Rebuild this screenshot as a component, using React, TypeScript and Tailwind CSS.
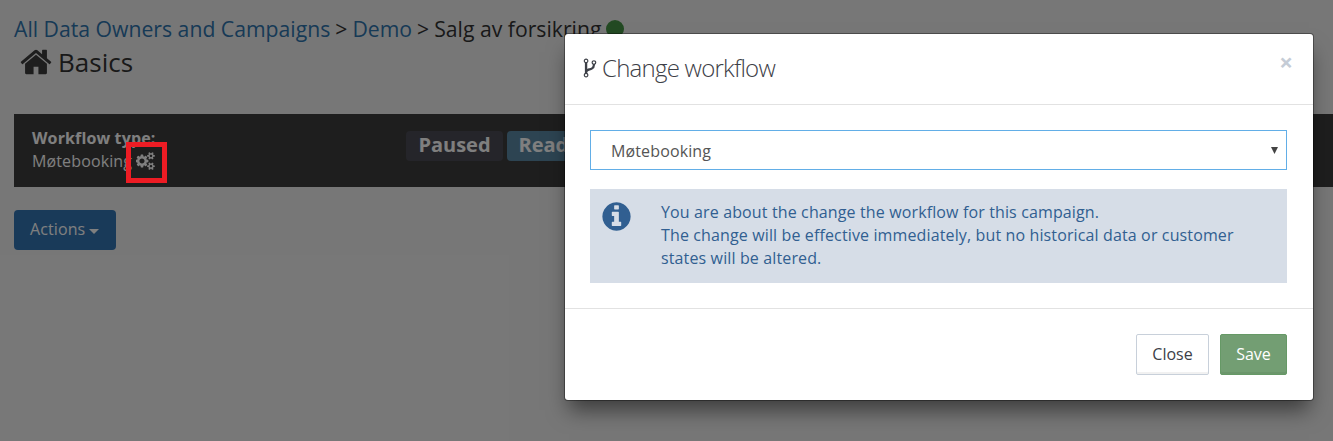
import type { ReactNode } from "react";

const ICONS = {
  home: "M1472 992v480q0 26-19 45t-45 19h-384v-384h-256v384h-384q-26 0-45-19t-19-45v-480q0-1 .5-3t.5-3l575-474 575 474q1 2 1 6zm223-69l-62 74q-8 9-21 11h-3q-13 0-21-7l-692-577-692 577q-12 8-24 7-13-2-21-11l-62-74q-8-10-7-23.5t11-21.5l719-599q32-26 76-26t76 26l244 204v-195q0-14 9-23t23-9h192q14 0 23 9t9 23v408l219 182q10 8 11 21.5t-7 23.5z",
  cogs: "M832 896q0-106-75-181t-181-75-181 75-75 181 75 181 181 75 181-75 75-181zm768 512q0-52-38-90t-90-38-90 38-38 90q0 53 37.5 90.5t90.5 37.5 90.5-37.5 37.5-90.5zm0-1024q0-52-38-90t-90-38-90 38-38 90q0 53 37.5 90.5t90.5 37.5 90.5-37.5 37.5-90.5zm-384 421v185q0 10-7 19.5t-16 10.5l-155 24q-11 35-32 76 34 48 90 115 7 11 7 20 0 12-7 19-23 30-82.5 89.5t-78.5 59.5q-11 0-21-7l-115-90q-37 19-77 31-11 108-23 155-7 24-30 24h-186q-11 0-20-7.5t-10-17.5l-23-153q-34-10-75-31l-118 89q-7 7-20 7-11 0-21-8-144-133-144-160 0-9 7-19 10-14 41-53t47-61q-23-44-35-82l-152-24q-10-1-17-9.5t-7-19.5v-185q0-10 7-19.5t16-10.5l155-24q11-35 32-76-34-48-90-115-7-11-7-20 0-12 7-20 22-30 82-89t79-59q11 0 21 7l115 90q34-18 77-32 11-108 23-154 7-24 30-24h186q11 0 20 7.5t10 17.5l23 153q34 10 75 31l118-89q8-7 20-7 11 0 21 8 144 133 144 160 0 8-7 19-12 16-42 54t-45 60q23 48 34 82l152 23q10 2 17 10.5t7 19.5zm640 533v140q0 16-149 31-12 27-30 52 51 113 51 138 0 4-4 7-122 71-124 71-8 0-46-47t-52-68q-20 2-30 2t-30-2q-14 21-52 68t-46 47q-2 0-124-71-4-3-4-7 0-25 51-138-18-25-30-52-149-15-149-31v-140q0-16 149-31 13-29 30-52-51-113-51-138 0-4 4-7 4-2 35-20t59-34 30-16q8 0 46 46.5t52 67.5q20-2 30-2t30 2q51-71 92-112l6-2q4 0 124 70 4 3 4 7 0 25-51 138 17 23 30 52 149 15 149 31zm0-1024v140q0 16-149 31-12 27-30 52 51 113 51 138 0 4-4 7-122 71-124 71-8 0-46-47t-52-68q-20 2-30 2t-30-2q-14 21-52 68t-46 47q-2 0-124-71-4-3-4-7 0-25 51-138-18-25-30-52-149-15-149-31v-140q0-16 149-31 13-29 30-52-51-113-51-138 0-4 4-7 4-2 35-20t59-34 30-16q8 0 46 46.5t52 67.5q20-2 30-2t30 2q51-71 92-112l6-2q4 0 124 70 4 3 4 7 0 25-51 138 17 23 30 52 149 15 149 31z",
  fork: "M672 1472q0-40-28-68t-68-28-68 28-28 68 28 68 68 28 68-28 28-68zm0-1152q0-40-28-68t-68-28-68 28-28 68 28 68 68 28 68-28 28-68zm640 128q0-40-28-68t-68-28-68 28-28 68 28 68 68 28 68-28 28-68zm96 0q0 52-26 96.5t-70 69.5q-2 287-226 414-67 38-203 81-128 40-169.5 71t-41.5 100v26q44 25 70 69.5t26 96.5q0 80-56 136t-136 56-136-56-56-136q0-52 26-96.5t70-69.5v-820q-44-25-70-69.5t-26-96.5q0-80 56-136t136-56 136 56 56 136q0 52-26 96.5t-70 69.5v497q54-26 154-57 55-17 87.5-29.5t70.5-31 59-39.5 40.5-51 28-69.5 8.5-91.5q-44-25-70-69.5t-26-96.5q0-80 56-136t136-56 136 56 56 136z",
  info: "M1152 1376v-160q0-14-9-23t-23-9h-96v-512q0-14-9-23t-23-9h-320q-14 0-23 9t-9 23v160q0 14 9 23t23 9h96v320h-96q-14 0-23 9t-9 23v160q0 14 9 23t23 9h448q14 0 23-9t9-23zm-128-896v-160q0-14-9-23t-23-9h-192q-14 0-23 9t-9 23v160q0 14 9 23t23 9h192q14 0 23-9t9-23zm640 416q0 209-103 385.5t-279.5 279.5-385.5 103-385.5-103-279.5-279.5-103-385.5 103-385.5 279.5-279.5 385.5-103 385.5 103 279.5 279.5 103 385.5z",
};

function Icon({ name, viewBox = "0 0 1792 1792", className }: { name: keyof typeof ICONS; viewBox?: string; className: string }) {
  return (
    <svg viewBox={viewBox} fill="currentColor" className={className}>
      <path d={ICONS[name]} />
    </svg>
  );
}

function Crumb({ children }: { children: ReactNode }) {
  return <a className="text-[#2f74ad]">{children}</a>;
}

function CampaignPage() {
  return (
    <div className="h-[441px] bg-[#efefef] pl-3.5 pt-3.5 text-[#333]">
      <nav className="flex h-[30px] items-center gap-[5px] whitespace-nowrap text-[21.2px]">
        <Crumb>All Data Owners and Campaigns</Crumb>
        <span>&gt;</span>
        <Crumb>Demo</Crumb>
        <span>&gt;</span>
        <span>Salg av forsikring</span>
        <span className="size-[18px] rounded-full bg-[#469446]" />
      </nav>

      <h1 className="flex h-9 items-center pl-[5px] text-[26px]">
        <Icon name="home" className="mr-[5px] size-[34px] text-[#3c3c3c]" />
        Basics
      </h1>

      <section className="mt-[34px] flex h-[73px] bg-[#3c3c3c] pl-[18px] pt-[13px] text-white">
        <div className="w-[374px] text-base leading-[23px] tracking-[0.13px]">
          <div className="font-bold">Workflow type:</div>
          <div className="flex items-center gap-1">
            Møtebooking
            <Icon name="cogs" viewBox="0 0 1856 1792" className="mb-0.5 h-[18px] w-[19px]" />
          </div>
        </div>
        <div className="mt-1 flex gap-1 text-xl font-bold leading-[28px]">
          <span className="h-[30px] w-[97px] rounded bg-[#4b4b54] text-center">Paused</span>
          <span className="h-[30px] w-[84px] rounded bg-[#5b89a4] text-center">Ready</span>
        </div>
      </section>

      <button className="mt-[23px] flex h-10 w-[102px] items-center gap-1 rounded-sm bg-[#3374b2] pb-0.5 pl-4 text-base tracking-[0.1px] text-white">
        Actions
        <span className="mt-1 border-x-5 border-t-5 border-x-transparent border-t-white" />
      </button>
    </div>
  );
}

function WorkflowModal() {
  return (
    <div className="absolute left-[565px] top-[34px] h-[366px] w-[748px] rounded-[3px] bg-white text-base shadow-[0_0_0_1px_rgba(0,0,0,0.35),0_14px_20px_-4px_rgba(0,0,0,0.5)]">
      <header className="flex h-[71px] items-center justify-between border-b border-[#e2e2e2] pl-3.5 pr-5">
        <h2 className="flex items-center pb-0.5 text-2xl font-light tracking-[-0.75px] text-[#3d4047]">
          <Icon name="fork" className="size-[22px]" />
          <span className="ml-px">Change workflow</span>
        </h2>
        <button className="mb-3.5 text-2xl font-bold leading-none text-[#c5ccd6]">×</button>
      </header>

      <div className="pl-[25px] pr-[26px] pt-[25px] tracking-[0.13px]">
        <div className="flex h-10 items-center justify-between border border-[#62aee7] pl-5 pr-2 text-[#555]">
          <span className="pt-0.5">Møtebooking</span>
          <svg viewBox="0 0 7 7" className="size-[7px] fill-[#444]">
            <path d="M0 0h7L3.5 7z" />
          </svg>
        </div>
        <div className="mt-[19px] flex h-[94px] bg-[#d6dde7] pl-2.5 pt-3 leading-[23px] text-[#315f91]">
          <Icon name="info" className="mt-[-1px] size-[33px]" />
          <p className="ml-7 whitespace-nowrap">
            You are about the change the workflow for this campaign.
            <br />
            The change will be effective immediately, but no historical data or customer
            <br />
            states will be altered.
          </p>
        </div>
      </div>

      <footer className="mt-[25px] flex justify-end gap-[11px] border-t border-[#e2e2e2] pr-[26px] pt-[25px]">
        <button className="h-[41px] w-[73px] rounded-xs border border-[#c8d0da] pb-0.5 text-[#3d4047] shadow-[inset_0_-2px_0_#f1f1f1]">Close</button>
        <button className="h-[41px] w-[67px] rounded-xs border border-[#669966] bg-[#739e73] pb-0.5 text-white shadow-[inset_0_-2px_0_#6b966b]">Save</button>
      </footer>
    </div>
  );
}

export default function App() {
  return (
    <div className="relative h-[441px] w-[1333px] overflow-hidden font-['Open_Sans','Noto_Sans',sans-serif]">
      <CampaignPage />
      <div className="absolute inset-0 bg-black/50" />
      <div className="absolute left-[126px] top-[142px] size-[41px] border-5 border-[#ed1c24]" />
      <WorkflowModal />
    </div>
  );
}
